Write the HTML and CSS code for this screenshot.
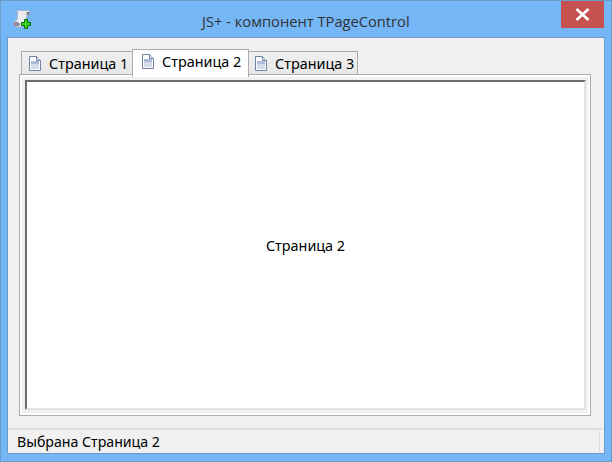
FILE: index.html
```html
<!DOCTYPE html>
<html lang="ru">
<head>
<meta charset="utf-8">
<title>JS+ - компонент TPageControl</title>
<link rel="stylesheet" href="styles.css">
</head>
<body>
<div class="window">
  <header class="titlebar">
    <svg class="app-icon" width="20" height="20" viewBox="0 0 20 20">
      <path d="M5 1.500 C8 .8 12 2 15.500 1.500 C18 1.500 18.500 4 17 6 L15 6 L14 12 L11 17 C8 18.500 4 18.500 2.500 17 C.8 15.500 1 12.500 3.500 12 L5 11 L5.500 5 C5.500 3.500 5 3 5 1.500Z" fill="#ececf3" stroke="#a9a9bb" stroke-width=".8"/>
      <path d="M2.500 13 C4.500 12.500 8 13.500 8 15.500 C8 17.500 4 17.800 2.500 16.800 C1.300 15.500 1.500 14 2.500 13Z" fill="#8e8ea4"/>
      <path d="M14.500 3 L17.500 3 L17 6 L14.500 5.500Z" fill="#77778c"/>
      <path d="M12.500 10.500 h3 v3 h3 v3 h-3 v3 h-3 v-3 h-3 v-3 h3z" fill="#37d61b" stroke="#0b6a08" stroke-width="1"/>
    </svg>
    <h1 class="title">JS+ - компонент TPageControl</h1>
    <button class="close" aria-label="Закрыть">
      <svg width="15" height="13" viewBox="0 0 15 13"><path d="M1.500 1 L13.500 12 M13.500 1 L1.500 12" stroke="#fff" stroke-width="2.600" fill="none"/></svg>
    </button>
  </header>
  <main class="client">
    <div class="pages">
      <div class="tabs">
        <div class="tab tab-first">
          <svg class="doc" width="12" height="15" viewBox="0 0 12 15"><path class="doc-page" d="M.5.5H7.500L11.500 4.500V14.500H.5Z"/><rect class="doc-band" x="2" y="5" width="8" height="3"/><rect class="doc-fill" x="2" y="8" width="8" height="5"/><path class="doc-fold" d="M7.500.5V4.500H11.500"/></svg>
          <span>Страница 1</span>
        </div>
        <div class="tab tab-active">
          <svg class="doc" width="12" height="15" viewBox="0 0 12 15"><path class="doc-page" d="M.5.5H7.500L11.500 4.500V14.500H.5Z"/><rect class="doc-band" x="2" y="5" width="8" height="3"/><rect class="doc-fill" x="2" y="8" width="8" height="5"/><path class="doc-fold" d="M7.500.5V4.500H11.500"/></svg>
          <span>Страница 2</span>
        </div>
        <div class="tab tab-last">
          <svg class="doc" width="12" height="15" viewBox="0 0 12 15"><path class="doc-page" d="M.5.5H7.500L11.500 4.500V14.500H.5Z"/><rect class="doc-band" x="2" y="5" width="8" height="3"/><rect class="doc-fill" x="2" y="8" width="8" height="5"/><path class="doc-fold" d="M7.500.5V4.500H11.500"/></svg>
          <span>Страница 3</span>
        </div>
      </div>
      <div class="sheet">
        <div class="panel">Страница 2</div>
      </div>
    </div>
    <footer class="status">
      <span>Выбрана Страница 2</span>
      <i class="grip"></i>
    </footer>
  </main>
</div>
</body>
</html>
```

FILE: styles.css
```css
html, body {
  margin: 0;
  padding: 0;
}
body {
  width: 612px;
  height: 462px;
  overflow: hidden;
  font-family: "Noto Sans", sans-serif;
}
.window {
  box-sizing: border-box;
  width: 612px;
  height: 462px;
  display: flex;
  flex-direction: column;
  padding: 0 8px 9px 8px;
  background: #74b6f6;
  box-shadow: inset 0 0 0 1px #6b9cc9;
}
.titlebar {
  height: 38px;
  flex: none;
  display: flex;
  align-items: flex-start;
  position: relative;
}
.app-icon {
  position: absolute;
  left: 4px;
  top: 9px;
}
.title {
  margin: 13px 0 0 194px;
  font: 400 14.700px/16px "Open Sans", sans-serif;
  color: #333;
  white-space: nowrap;
}
.close {
  position: absolute;
  right: 0;
  top: 1px;
  width: 43px;
  height: 27px;
  padding: 0;
  border: 0;
  background: #c75050;
  display: flex;
  align-items: center;
  justify-content: center;
}
.client {
  flex: 1;
  display: flex;
  flex-direction: column;
  background: #f0f0f0;
  box-shadow: 0 0 0 1px #6b9cc9;
  padding: 11px 13px 0 11px;
}
.pages {
  display: flex;
  flex-direction: column;
}
.tabs {
  height: 28px;
  padding-left: 2px;
  display: flex;
  align-items: flex-start;
  position: relative;
  z-index: 1;
}
.tab {
  box-sizing: border-box;
  display: flex;
  align-items: center;
  gap: 8px;
  margin-top: 2px;
  height: 24px;
  padding: 1px 3px 0 7px;
  border: 1px solid #acacac;
  background: linear-gradient(#f0f0f0, #e7e7e7);
  font-size: 14.400px;
  color: #000;
  white-space: nowrap;
}
.tab-first {
  width: 111px;
  border-right: 0;
}
.tab-active {
  width: 117px;
  height: 28px;
  margin-top: 0;
  padding: 0 3px 4px 9px;
  background: #fff;
  border-bottom: 0;
}
.tab-last {
  width: 109px;
  border-left: 0;
  padding-left: 6px;
}
.doc {
  flex: none;
}
.doc-page {
  fill: #fff;
  stroke: #6f81a6;
}
.doc-fold {
  fill: #d8deea;
  stroke: #6f81a6;
}
.doc-band {
  fill: #aebbd8;
}
.doc-fill {
  fill: #d3dbec;
}
.sheet {
  box-sizing: border-box;
  width: 572px;
  height: 342px;
  margin-top: -3px;
  padding: 5px 4px 5px 5px;
  border: 1px solid #acacac;
  background: #f0f0f0;
  box-shadow: inset 0 0 0 2px #fff;
}
.panel {
  box-sizing: border-box;
  height: 100%;
  display: flex;
  align-items: center;
  justify-content: center;
  background: #fff;
  border: 2px solid #e3e3e3;
  border-top-color: #6d6d6d;
  border-left-color: #6d6d6d;
  font-size: 14.400px;
  color: #000;
}
.status {
  margin: 12px -11px 0 -11px;
  height: 25px;
  border-top: 2px solid #dcdcdc;
  box-sizing: border-box;
  display: flex;
  align-items: center;
  justify-content: space-between;
  padding: 0 2px 0 9px;
  font-size: 14.150px;
  color: #000;
}
.grip {
  width: 1px;
  height: 21px;
  background: #d8d8d8;
}
```
